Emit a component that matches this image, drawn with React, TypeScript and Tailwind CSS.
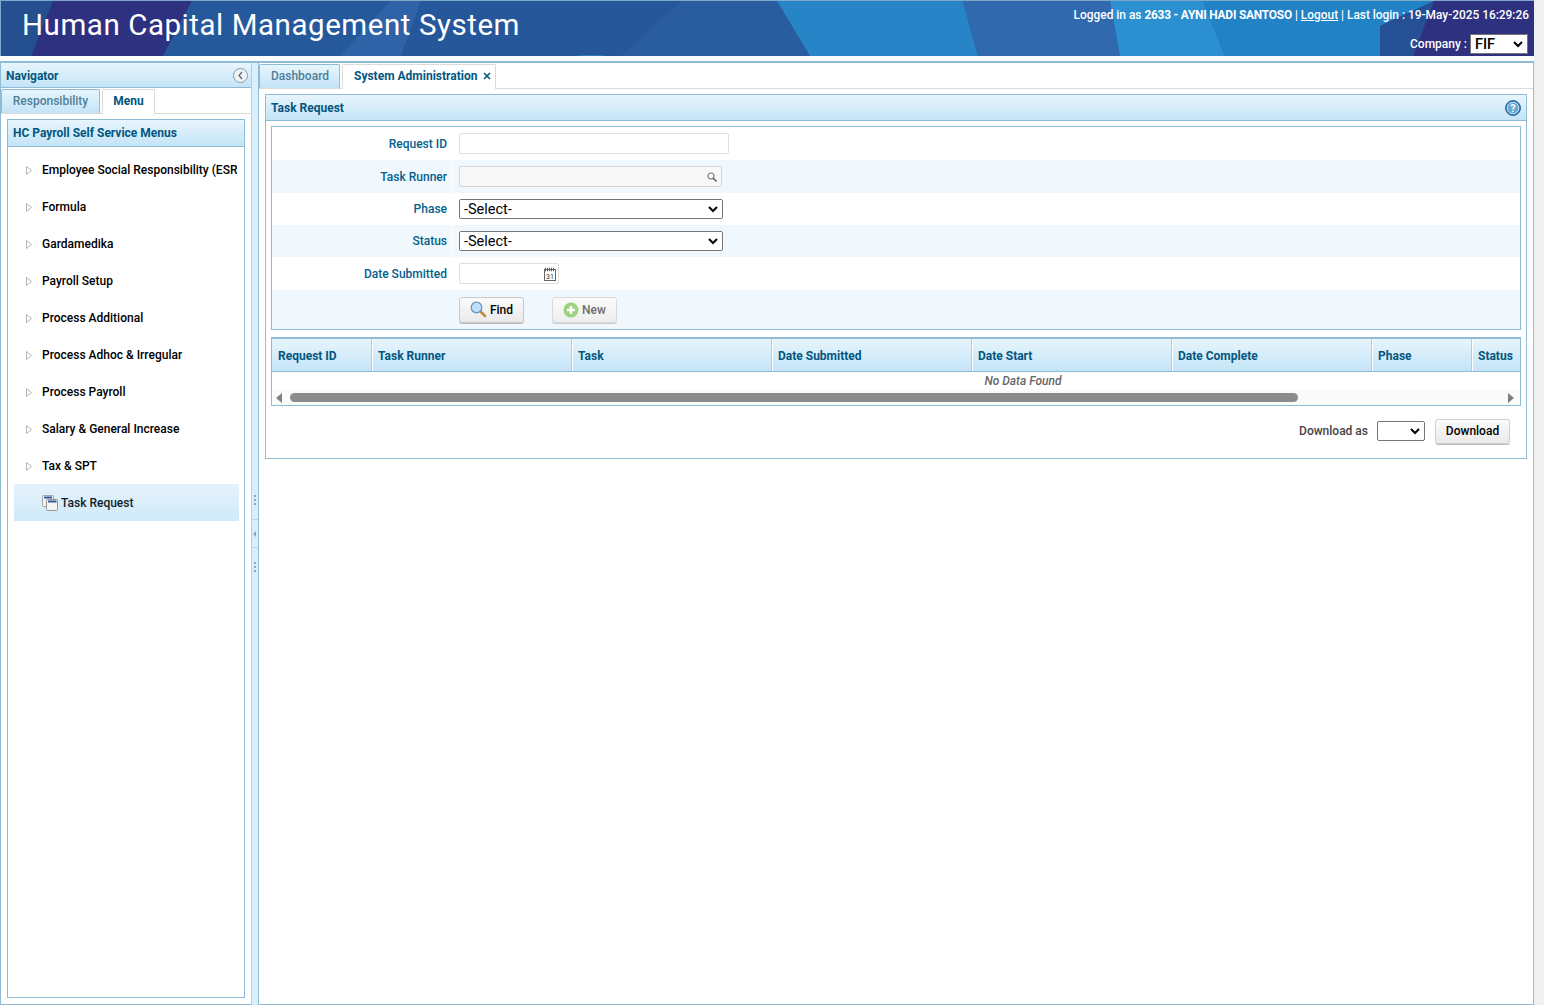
const menuItems = [
  'Employee Social Responsibility (ESR)',
  'Formula',
  'Gardamedika',
  'Payroll Setup',
  'Process Additional',
  'Process Adhoc & Irregular',
  'Process Payroll',
  'Salary & General Increase',
  'Tax & SPT',
];

const columns = [
  { label: 'Request ID', width: 'w-[100px]' },
  { label: 'Task Runner', width: 'w-[200px]' },
  { label: 'Task', width: 'w-[200px]' },
  { label: 'Date Submitted', width: 'w-[200px]' },
  { label: 'Date Start', width: 'w-[200px]' },
  { label: 'Date Complete', width: 'w-[200px]' },
  { label: 'Phase', width: 'w-[100px]' },
  { label: 'Status', width: 'flex-1' },
];

const gradient = 'bg-gradient-to-b from-[#e8f5fc] to-[#c3e4f7]';

function HeaderBackground() {
  return (
    <svg className="absolute inset-0 h-full w-full" viewBox="0 0 1533 55" preserveAspectRatio="none">
      <rect width="1533" height="55" fill="#25569a" />
      <polygon points="0,0 52,0 30,55 0,55" fill="#24508f" />
      <polygon points="30,55 52,0 191,0 162,55" fill="#2e3180" />
      <polygon points="162,55 191,0 389,0 339,55" fill="#26589c" />
      <polygon points="339,55 389,0 420,0 400,55" fill="#2f62a6" />
      <polygon points="400,55 420,0 776,0 809,55" fill="#25579a" />
      <polygon points="620,55 680,0 776,0 809,55" fill="#2a5d9f" />
      <ellipse cx="590" cy="56" rx="17" ry="2" fill="#2a86c8" />
      <polygon points="776,0 962,0 977,55 809,55" fill="#2784c6" />
      <polygon points="962,0 1109,0 1119,55 977,55" fill="#3069ae" />
      <polygon points="1109,0 1202,0 1224,55 1119,55" fill="#2b8fd0" />
      <polygon points="1202,0 1433,0 1379,25 1379,55 1224,55" fill="#2182c6" />
      <polygon points="1379,55 1379,25 1433,0 1412,55" fill="#265094" />
      <polygon points="1412,55 1433,0 1533,0 1533,55" fill="#2e3180" />
    </svg>
  );
}

function FieldRow({ label, shaded, children, tall }: { label: string; shaded?: boolean; children: React.ReactNode; tall?: boolean }) {
  return (
    <div className={`flex items-center ${tall ? 'h-[33px]' : 'h-[32px]'} ${shaded ? 'bg-[#f0f8fd]' : 'bg-white'}`}>
      <div className={`w-[180px] pr-[5px] text-right text-[12px] font-medium text-[#03608c] ${tall ? 'pt-px' : ''}`}>{label}</div>
      <div className="flex h-full flex-1 items-center border-l border-white pl-[6px]">{children}</div>
    </div>
  );
}

function Select({ className, text }: { className: string; text?: string }) {
  return (
    <div className={`flex items-center justify-between rounded-[2px] border border-[#767676] bg-white pl-[4px] pr-[3px] text-[14.5px] text-black ${className}`}>
      <span className="pt-px">{text}</span>
      <svg width="12" height="8" viewBox="0 0 12 8">
        <path d="M2 2 L6 6 L10 2" fill="none" stroke="#000" strokeWidth="2" />
      </svg>
    </div>
  );
}

function SplitterDots({ className }: { className: string }) {
  return (
    <div className={`absolute left-0 flex flex-col items-center gap-[2px] px-[2px] ${className}`}>
      <i className="h-[2px] w-[2px] bg-[#8fa9b8]" />
      <i className="h-[2px] w-[2px] bg-[#8fa9b8]" />
      <i className="h-[2px] w-[2px] bg-[#8fa9b8]" />
    </div>
  );
}

function App() {
  return (
    <div className="relative h-[1005px] w-[1544px] overflow-hidden bg-[#f0f0f0] text-[12px] [font-family:Roboto,'Liberation_Sans',sans-serif]">
      <div className="h-full w-[1534px] bg-white">
        {/* header */}
        <div className="relative h-[56px] w-[1534px] border-l border-t border-[#7ea8c8] text-white">
          <HeaderBackground />
          <div className="relative flex h-full justify-between">
            <h1 className="pl-[21px] pt-[6px] text-[29.5px] leading-[36px] font-normal tracking-[0.55px]">Human Capital Management System</h1>
            <div className="flex flex-col items-end pr-[5px] pt-[7px]">
              <div className="text-[11.9px] leading-[15px] font-medium">
                Logged in as <b className="font-bold tracking-[-0.2px]">2633 - AYNI HADI SANTOSO</b> | <u>Logout</u> | Last login : 19-May-2025 16:29:26
              </div>
              <div className="mr-px mt-[11px] flex items-center gap-[3px] font-medium">
                <span>Company :</span>
                <Select className="h-[20px] w-[58px] rounded-none text-[#111]" text="FIF" />
              </div>
            </div>
          </div>
        </div>

        <div className="mt-[5px] flex h-[944px] w-[1534px]">
          {/* navigator */}
          <aside className="flex h-full w-[252px] flex-col border border-t-2 border-[#8fbcd4] border-r-[#c9c9c9] pb-[1px]">
            <div className={`flex h-[25px] shrink-0 items-center justify-between border-b border-[#8fbcd4] pl-[5px] pr-[3px] pt-[1px] text-[12px] font-bold text-[#03567f] ${gradient}`}>
              <span>Navigator</span>
              <span className="flex h-[15px] w-[15px] items-center justify-center rounded-full border border-[#8a9aa3] bg-[#eef3f6]">
                <svg width="7" height="9" viewBox="0 0 7 9"><path d="M5 1 L2 4.5 L5 8" fill="none" stroke="#55666f" strokeWidth="1.2" /></svg>
              </span>
            </div>
            <div className="flex h-[26px] shrink-0 items-end gap-[2px] border-b border-[#dcdcdc]">
              <div className={`flex h-[24px] w-[99px] items-center justify-center rounded-t-[2px] border border-b-0 border-[#8fbcd4] pb-[2px] font-medium text-[#4f7f99] ${gradient}`}>Responsibility</div>
              <div className="-mb-px flex h-[25px] w-[53px] items-center justify-center rounded-t-[2px] border border-b-0 border-[#dcdcdc] bg-white pb-[2px] font-bold text-[#03567f]">Menu</div>
            </div>
            <div className="mx-[6px] mb-[5px] mt-[5px] flex flex-1 flex-col border border-[#8fbcd4]">
              <div className={`flex h-[27px] shrink-0 items-center border-b border-[#8fbcd4] pl-[5px] font-bold text-[#03567f] ${gradient}`}>HC Payroll Self Service Menus</div>
              <div className="overflow-hidden pl-[6px] pr-[5px] pt-[4px]">
                {menuItems.map((item) => (
                  <div key={item} className="flex h-[37px] items-center pl-[12px] pt-px font-medium whitespace-nowrap text-black">
                    <svg width="6" height="9" viewBox="0 0 6 9" className="mr-[10px] shrink-0"><path d="M0.5 0.5 L5.5 4.5 L0.5 8.5 Z" fill="#fff" stroke="#b5b5b5" /></svg>
                    <span className="w-[195px] overflow-hidden">{item}</span>
                  </div>
                ))}
                <div className="flex h-[37px] items-center bg-gradient-to-b from-[#e4f2fb] to-[#d0e9f9] pl-[28px] pt-px font-medium text-[#0f1f2a]">
                  <svg width="16" height="16" viewBox="0 0 16 16" className="mr-[3px] shrink-0">
                    <rect x="0.5" y="0.5" width="11" height="11" rx="1" fill="#f2f2f2" stroke="#a5a5a5" />
                    <rect x="2" y="1.5" width="8" height="2" fill="#2f5a9e" />
                    <rect x="4.5" y="4.5" width="11" height="11" rx="1" fill="#f5f5f5" stroke="#969696" />
                    <rect x="6" y="5.5" width="8.5" height="2" fill="#2f5a9e" />
                  </svg>
                  Task Request
                </div>
              </div>
            </div>
          </aside>

          {/* splitter */}
          <div className="relative h-full w-[6px] shrink-0 border-t-2 border-[#8fbcd4] bg-[#d9effc]">
            <SplitterDots className="top-[432px]" />
            <div className="absolute left-0 top-[456px] flex h-[29px] w-full items-center border-y border-[#bcd6e4]">
              <svg width="4" height="6" viewBox="0 0 4 6" className="ml-px"><path d="M3 0 L0 3 L3 6 Z" fill="#8fa9b8" /></svg>
            </div>
            <SplitterDots className="top-[499px]" />
          </div>

          {/* main */}
          <main className="flex h-full flex-1 flex-col border border-t-2 border-[#8fbcd4]">
            <div className="flex h-[26px] shrink-0 items-end gap-[2px] border-b border-[#dcdcdc]">
              <div className={`flex h-[24px] w-[81px] items-center justify-center rounded-t-[2px] border border-b-0 border-[#8fbcd4] pb-[2px] pl-px font-medium text-[#4f7f99] ${gradient}`}>Dashboard</div>
              <div className="-mb-px flex h-[25px] w-[154px] items-center gap-[6px] rounded-t-[2px] border border-b-0 border-[#dcdcdc] bg-white pb-[2px] pl-[11px] font-bold text-[#03567f]">
                System Administration
                <svg width="8" height="8" viewBox="0 0 8 8"><path d="M1 1 L7 7 M7 1 L1 7" stroke="#03567f" strokeWidth="1.6" /></svg>
              </div>
            </div>

            <section className="mx-[6px] mt-[5px] border border-[#8fbcd4]">
              <div className={`flex h-[26px] items-center justify-between border-b border-[#8fbcd4] px-[5px] font-bold text-[#03567f] ${gradient}`}>
                <span className="pt-px">Task Request</span>
                <svg width="16" height="16" viewBox="0 0 16 16">
                  <circle cx="8" cy="8" r="7.5" fill="#3a7fb6" stroke="#2c6a9b" />
                  <circle cx="8" cy="8" r="5.8" fill="#6ba9d6" stroke="#d9ecf8" strokeWidth="0.8" />
                  <text x="8" y="11.5" textAnchor="middle" fontSize="10" fontWeight="700" fill="#fff">?</text>
                </svg>
              </div>

              <div className="mx-[5px] mt-[5px] border border-[#8fbcd4]">
                <FieldRow label="Request ID" tall>
                  <div className="h-[21px] w-[270px] rounded-[2px] border border-[#dfdfdf] bg-white" />
                </FieldRow>
                <FieldRow label="Task Runner" shaded tall>
                  <div className="flex h-[21px] w-[263px] items-center justify-end rounded-[2px] border border-[#d5d5d5] bg-[#f8f8f8] pr-[4px]">
                    <svg width="10" height="10" viewBox="0 0 10 10"><circle cx="4" cy="4" r="3" fill="#fff" stroke="#777" strokeWidth="1.2" /><path d="M6 6 L9.5 9.5" stroke="#666" strokeWidth="1.6" /></svg>
                  </div>
                </FieldRow>
                <FieldRow label="Phase">
                  <Select className="h-[20px] w-[264px]" text="-Select-" />
                </FieldRow>
                <FieldRow label="Status" shaded>
                  <Select className="h-[20px] w-[264px]" text="-Select-" />
                </FieldRow>
                <FieldRow label="Date Submitted" tall>
                  <div className="flex h-[21px] w-[100px] items-center justify-end rounded-[2px] border border-[#dfdfdf] bg-white pr-[2px]">
                    <svg width="12" height="14" viewBox="0 0 12 14">
                      <rect x="0.5" y="2.5" width="11" height="11" fill="#fff" stroke="#666" />
                      <path d="M1 1.5 H11 M1 3.5 H11" stroke="#555" strokeDasharray="1 1" strokeWidth="1.4" />
                      <text x="6" y="12" textAnchor="middle" fontSize="7" fill="#333">31</text>
                    </svg>
                  </div>
                </FieldRow>
                <div className="flex h-[39px] items-center bg-[#f0f8fd] pl-[187px]">
                  <button className="flex h-[26px] w-[65px] items-center justify-center gap-[3px] rounded-[3px] border border-[#c9c9c9] bg-gradient-to-b from-[#fbfbfb] to-[#eaeaea] font-medium text-black shadow-[0_1px_0_#bbb]">
                    <svg width="17" height="17" viewBox="0 0 17 17">
                      <path d="M10.5 10.5 L15 15" stroke="#c9873a" strokeWidth="2.6" strokeLinecap="round" />
                      <circle cx="6.5" cy="6.5" r="5.3" fill="#bfe0f7" stroke="#5f94c0" strokeWidth="1.2" />
                    </svg>
                    <span className="pt-px">Find</span>
                  </button>
                  <button className="ml-[28px] flex h-[26px] w-[65px] items-center justify-center gap-[3px] rounded-[3px] border border-[#dadada] bg-gradient-to-b from-[#fbfbfb] to-[#eeeeee] font-medium text-[#6e6e6e] shadow-[0_1px_0_#ccc]">
                    <svg width="16" height="16" viewBox="0 0 16 16">
                      <circle cx="8" cy="8" r="7.5" fill="#9bd27d" />
                      <path d="M8 4 V12 M4 8 H12" stroke="#fff" strokeWidth="2.6" />
                    </svg>
                    <span className="pt-px">New</span>
                  </button>
                </div>
              </div>

              <div className="mx-[5px] mt-[7px] border border-t-2 border-[#8fbcd4]">
                <div className={`flex h-[33px] border-b border-[#8fbcd4] font-bold text-[#03567f] ${gradient}`}>
                  {columns.map((col) => (
                    <div key={col.label} className={`flex items-center border-r border-[#a9cfe5] pl-[6px] pt-px shadow-[1px_0_0_#ffffff] ${col.width} last:border-r-0 last:shadow-none`}>{col.label}</div>
                  ))}
                </div>
                <div className="h-[18px] pl-[254px] text-center text-[12px] leading-[18px] font-medium text-[#666] italic">No Data Found</div>
                <div className="flex h-[15px] items-center bg-[#fafafa] pl-[4px] pr-[6px]">
                  <svg width="6" height="10" viewBox="0 0 6 10"><path d="M6 0 L0 5 L6 10 Z" fill="#808080" /></svg>
                  <div className="ml-[8px] h-[9px] w-[1008px] rounded-full bg-[#8b8b8b]" />
                  <svg width="6" height="10" viewBox="0 0 6 10" className="ml-auto"><path d="M0 0 L6 5 L0 10 Z" fill="#808080" /></svg>
                </div>
              </div>

              <div className="flex h-[52px] items-center justify-end pb-[2px] pr-[16px]">
                <span className="font-medium text-[#444]">Download as</span>
                <Select className="ml-[9px] h-[20px] w-[48px]" />
                <button className="ml-[10px] h-[25px] w-[75px] rounded-[3px] border border-[#d0d0d0] bg-gradient-to-b from-[#fbfbfb] to-[#eaeaea] font-medium text-black shadow-[0_1px_0_#bbb]">Download</button>
              </div>
            </section>
          </main>
        </div>
      </div>
    </div>
  );
}

export default App;
